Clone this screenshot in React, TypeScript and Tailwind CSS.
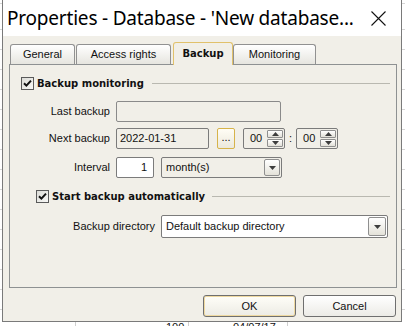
import React from "react";

const Check = ({ checked = true }: { checked?: boolean }) => (
  <span className="w-[13px] h-[13px] border border-[#5a5a5a] bg-[linear-gradient(135deg,#dcdcd7,#f8f8f6)] flex items-center justify-center shrink-0">
    {checked && (
      <svg width="9" height="9" viewBox="0 0 9 9">
        <path d="M1 4.2 L3.4 6.6 L8 1.6" fill="none" stroke="#111" strokeWidth="2" />
      </svg>
    )}
  </span>
);

const DropBtn = ({ size = "h-[17px] w-[16px]" }: { size?: string }) => (
  <span
    className={`${size} rounded-[2px] border border-[#8f8f8f] bg-[linear-gradient(to_bottom,#ffffff,#e4e2d9)] flex items-center justify-center shrink-0`}
  >
    <svg width="7" height="4" viewBox="0 0 7 4">
      <path d="M0 0 H7 L3.5 4 Z" fill="#3d3d3d" />
    </svg>
  </span>
);

const Spinner = () => (
  <div className="h-[21px] w-[42px] rounded-[2px] border border-[#7b7b7b] bg-[#f1efe8] flex items-center pl-[6px] pr-[1px]">
    <span className="flex-1">00</span>
    <div className="flex flex-col gap-[1px]">
      {[0, 1].map((i) => (
        <span
          key={i}
          className="h-[8px] w-[16px] rounded-[1px] border border-[#8f8f8f] bg-[linear-gradient(to_bottom,#ffffff,#e2e0d8)] flex items-center justify-center"
        >
          <svg width="7" height="4" viewBox="0 0 7 4">
            <path d={i === 0 ? "M0 4 H7 L3.5 0 Z" : "M0 0 H7 L3.5 4 Z"} fill="#3d3d3d" />
          </svg>
        </span>
      ))}
    </div>
  </div>
);

const Tab = ({ label, w, active = false }: { label: string; w: string; active?: boolean }) => (
  <div
    className={
      active
        ? `${w} h-[23px] -mb-px bg-[#f1efe8] border border-b-0 border-[#e1c16b] rounded-t-[3px] flex items-center justify-center font-['DejaVu_Sans'] font-bold text-[10px] pb-[2px]`
        : `${w} h-[20px] border border-b-0 border-[#919191] rounded-t-[3px] bg-[linear-gradient(to_bottom,#ffffff,#e6e5df)] flex items-center justify-center`
    }
  >
    {label}
  </div>
);

export default function App() {
  return (
    <div className="relative w-[405px] h-[326px] overflow-hidden bg-white font-['Liberation_Sans',sans-serif] text-[11px] text-[#111]">
      {/* spreadsheet behind the dialog */}
      <div className="absolute inset-0 bg-[repeating-linear-gradient(to_bottom,transparent_0,transparent_19px,#d6d6d6_19px,#d6d6d6_20px)] bg-[position:0_10px]" />
      <div className="absolute left-[75px] top-[320px] w-px h-[6px] bg-[#cfcfcf]" />
      <div className="absolute left-[188px] top-[320px] w-px h-[6px] bg-[#cfcfcf]" />
      <div className="absolute left-[287px] top-[320px] w-px h-[6px] bg-[#cfcfcf]" />
      <div className="absolute left-[166px] top-[322px] leading-none">100</div>
      <div className="absolute left-[233px] top-[322px] leading-none">04/07/17</div>

      {/* dialog window */}
      <div className="absolute left-[2px] top-0 w-[400px] h-[322px] border-x border-b border-[#7a7a7a] flex flex-col bg-[#f1efe8]">
        <div className="h-[36px] bg-white flex items-center justify-between pl-[4px] pr-[15px]">
          <span className="font-['Noto_Sans',sans-serif] text-[19px] text-black tracking-[-0.2px]">
            Properties - Database - 'New database...
          </span>
          <svg width="15" height="15" viewBox="0 0 15 15">
            <path d="M0.5 0.5 L14.5 14.5 M14.5 0.5 L0.5 14.5" stroke="#111" strokeWidth="1.1" />
          </svg>
        </div>

        <div className="flex-1 pl-[6px] pr-[4px] pt-[6px] flex flex-col">
          <div className="flex items-end h-[22px] relative z-10 pl-[1px]">
            <Tab label="General" w="w-[65px]" />
            <div className="w-px" />
            <Tab label="Access rights" w="w-[95px]" />
            <div className="w-[2px]" />
            <Tab label="Backup" w="w-[60px]" active />
            <Tab label="Monitoring" w="w-[83px]" />
          </div>

          <div className="h-[224px] border border-[#8e9192] flex flex-col pt-[12px]">
            <div className="flex items-center h-[13px] pl-[11px] pr-[6px]">
              <Check />
              <span className="ml-[3px] font-['DejaVu_Sans'] font-bold text-[10px]">Backup monitoring</span>
              <div className="flex-1 ml-[8px] h-px bg-[#b9b8b0]" />
            </div>

            <div className="flex items-center mt-[11px]">
              <span className="w-[100px] text-right">Last backup</span>
              <div className="ml-[6px] w-[165px] h-[21px] rounded-[2px] border border-[#8a8a8a]" />
            </div>

            <div className="flex items-center mt-[6px]">
              <span className="w-[100px] text-right">Next backup</span>
              <div className="ml-[6px] w-[93px] h-[21px] rounded-[2px] border border-[#7b7b7b] flex items-center pl-[3px]">
                2022-01-31
              </div>
              <div className="ml-[8px] w-[18px] h-[21px] rounded-[2px] border border-[#d6b34a] bg-[linear-gradient(to_bottom,#fffdf5,#ece9dc)] flex items-center justify-center pb-[3px]">
                ...
              </div>
              <div className="ml-[8px]">
                <Spinner />
              </div>
              <span className="mx-[4px]">:</span>
              <Spinner />
            </div>

            <div className="flex items-center mt-[8px]">
              <span className="w-[100px] text-right">Interval</span>
              <div className="ml-[6px] w-[38px] h-[21px] rounded-[2px] border border-[#7b7b7b] bg-white flex items-center justify-end pr-[6px]">
                1
              </div>
              <div className="ml-[7px] w-[121px] h-[21px] rounded-[2px] border border-[#7b7b7b] flex items-center pl-[4px] pr-[1px]">
                <span className="flex-1">month(s)</span>
                <DropBtn />
              </div>
            </div>

            <div className="flex items-center h-[13px] mt-[12px] pl-[26px] pr-[6px]">
              <Check />
              <span className="ml-[3px] font-['DejaVu_Sans'] font-bold text-[10px]">Start backup automatically</span>
              <div className="flex-1 ml-[7px] h-px bg-[#b9b8b0]" />
            </div>

            <div className="flex items-center mt-[12px]">
              <span className="w-[145px] text-right">Backup directory</span>
              <div className="ml-[6px] w-[227px] h-[23px] rounded-[2px] border border-[#7b7b7b] bg-white flex items-center pl-[4px] pr-[1px]">
                <span className="flex-1">Default backup directory</span>
                <DropBtn size="h-[19px] w-[18px]" />
              </div>
            </div>
          </div>

          <div className="flex justify-end gap-[7px] mt-[7px] pr-[1px]">
            <button className="w-[93px] h-[22px] rounded-[3px] border border-[#6f6f6f] bg-[linear-gradient(to_bottom,#fffef8,#ecebe4)] shadow-[inset_0_0_0_1px_#efd9a0]">
              OK
            </button>
            <button className="w-[93px] h-[22px] rounded-[3px] border border-[#6f6f6f] bg-[linear-gradient(to_bottom,#ffffff,#ecebe6)]">
              Cancel
            </button>
          </div>
        </div>
      </div>
    </div>
  );
}
